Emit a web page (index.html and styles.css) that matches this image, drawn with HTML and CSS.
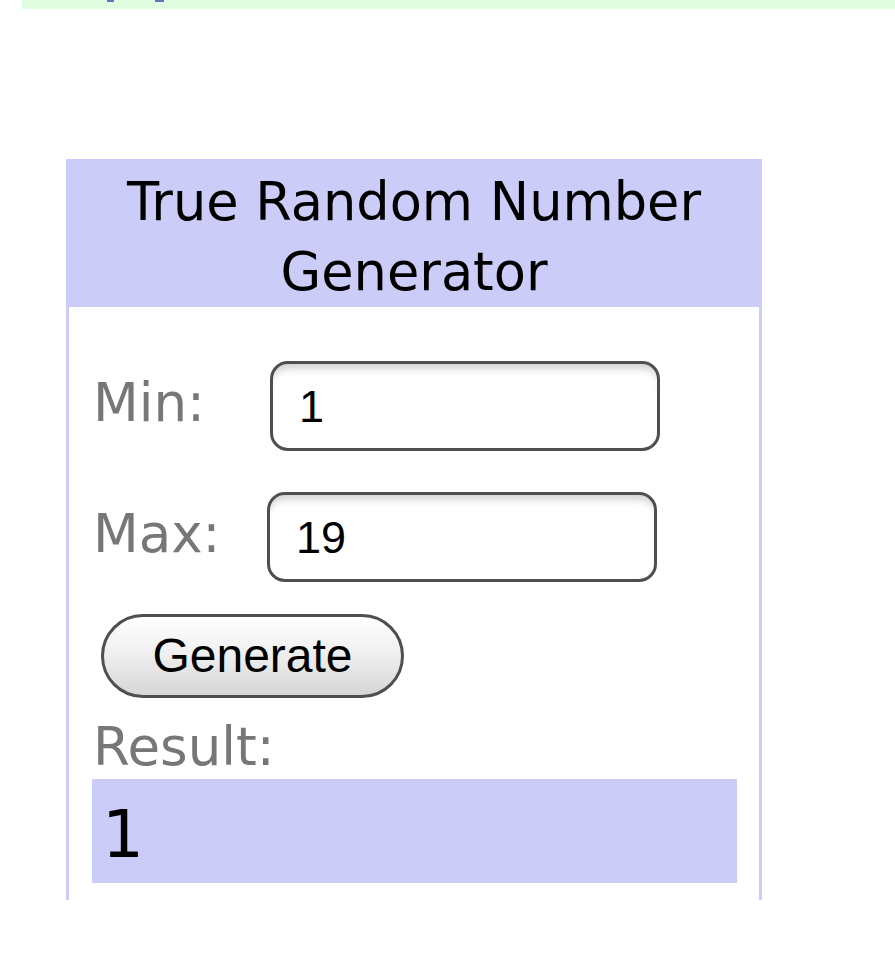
FILE: index.html
```html
<!DOCTYPE html>
<html>
<head>
<meta charset="utf-8">
<title>True Random Number Generator</title>
<link rel="stylesheet" href="styles.css">
</head>
<body>
<div class="topbar"><span class="mark mark-a"></span><span class="mark mark-b"></span></div>
<div class="widget">
  <div class="widget-head">True Random Number<br>Generator</div>
  <div class="widget-body">
    <div class="row row-min">
      <span class="label">Min:</span>
      <input class="field" type="text" value="1">
    </div>
    <div class="row row-max">
      <span class="label">Max:</span>
      <input class="field" type="text" value="19">
    </div>
    <button class="generate" type="button">Generate</button>
    <div class="label result-label">Result:</div>
    <div class="result">1</div>
  </div>
</div>
</body>
</html>
```
FILE: styles.css
```css
html, body {
  margin: 0;
  padding: 0;
  background: #ffffff;
}

body {
  font-family: "DejaVu Sans", Verdana, sans-serif;
}

.topbar {
  margin-left: 22px;
  height: 9px;
  background: #e1fde1;
  display: flex;
  align-items: flex-start;
}

.mark {
  display: block;
  height: 2px;
  background: #6a71c3;
}

.mark-a {
  margin-left: 85px;
  width: 7px;
}

.mark-b {
  margin-left: 41px;
  width: 9px;
}

.widget {
  margin-top: 150px;
  margin-left: 66px;
  width: 696px;
}

.widget-head {
  background: #ccccf9;
  color: #000;
  text-align: center;
  font-size: 52.6px;
  line-height: 70px;
  height: 140px;
  padding-top: 8px;
}

.widget-body {
  border-left: 3px solid #ccccf9;
  border-right: 3px solid #ccccf9;
  padding: 54px 22px 17px 24px;
  display: flex;
  flex-direction: column;
  align-items: flex-start;
}

.row {
  display: flex;
  align-items: flex-start;
  height: 90px;
}

.row-max {
  margin-top: 41px;
}

.label {
  color: #777777;
  font-size: 53px;
  line-height: 60px;
}

.row .label {
  margin-top: 12px;
}

.row-min .label {
  width: 177px;
}

.row-max .label {
  width: 174px;
}

.field {
  box-sizing: border-box;
  width: 390px;
  height: 90px;
  margin: 0;
  border: 3px solid #4f4f4f;
  border-radius: 18px;
  background: #ffffff;
  box-shadow: inset 0 10px 9px -6px rgba(0, 0, 0, 0.2);
  padding: 2px 0 0 26px;
  font-family: "Liberation Sans", Arial, sans-serif;
  font-size: 45px;
  color: #000;
  outline: none;
}

.generate {
  box-sizing: border-box;
  margin: 32px 0 0 8px;
  width: 303px;
  height: 84px;
  border: 3px solid #4f4f4f;
  border-radius: 42px;
  background: linear-gradient(to bottom, #ffffff 0%, #f0f0f0 45%, #d6d6d6 100%);
  font-family: "Liberation Sans", Arial, sans-serif;
  font-size: 48px;
  color: #000;
  padding: 0;
  line-height: 1;
}

.result-label {
  margin-top: 19px;
}

.result {
  box-sizing: border-box;
  margin: 2px 0 0 -1px;
  width: 645px;
  height: 104px;
  background: #ccccf9;
  padding: 17px 0 0 10px;
  font-size: 66px;
  line-height: 77px;
  color: #000;
}
```
